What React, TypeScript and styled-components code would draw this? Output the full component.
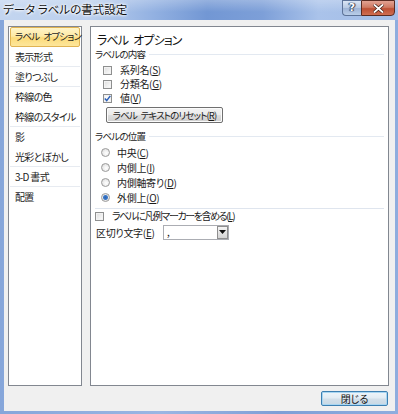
import styled, { createGlobalStyle } from 'styled-components';

const GlobalStyle = createGlobalStyle`
  html, body {
    margin: 0;
    padding: 0;
    background: #ffffff;
  }
  body {
    font-family: "Noto Sans CJK JP", "Noto Sans", sans-serif;
    font-feature-settings: "palt" 1;
    color: #1b1b1b;
  }
`;

const navItems = [
  { label: 'ラベル\u2002オプション', active: true, sep: false },
  { label: '表示形式', sep: true },
  { label: '塗りつぶし', sep: true },
  { label: '枠線の色', sep: false },
  { label: '枠線のスタイル', sep: true },
  { label: '影', sep: false },
  { label: '光彩とぼかし', sep: true },
  { label: '3-D 書式', sep: true },
  { label: '配置', sep: false },
];

const App = () => {
  return (
    <>
      <GlobalStyle />
      <Window>
        <TitleBar>
          <TitleText>データ ラベルの書式設定</TitleText>
          <CaptionButtons>
            <HelpButton>?</HelpButton>
            <CloseCaption>
              <svg width="11" height="9" viewBox="0 0 11 9">
                <path d="M1 0.5 L10 8.5 M10 0.5 L1 8.5" stroke="#3a1a12" strokeWidth="3.2" />
                <path d="M1 0.5 L10 8.5 M10 0.5 L1 8.5" stroke="#ffffff" strokeWidth="1.8" />
              </svg>
            </CloseCaption>
          </CaptionButtons>
        </TitleBar>
        <Client>
          <Panels>
            <NavList>
              {navItems.map((item) => (
                <NavItem key={item.label} $active={!!item.active} $sep={item.sep}>
                  {item.label}
                </NavItem>
              ))}
            </NavList>
            <OptionsPane>
              <PaneTitle>ラベル{'\u2002'}オプション</PaneTitle>
              <GroupHeader>ラベルの内容</GroupHeader>
              <CheckList>
                <OptionRow $indent={6}>
                  <CheckBox $checked={false} />
                  <span>系列名(<Key>S</Key>)</span>
                </OptionRow>
                <OptionRow $indent={6}>
                  <CheckBox $checked={false} />
                  <span>分類名(<Key>G</Key>)</span>
                </OptionRow>
                <OptionRow $indent={6}>
                  <CheckBox $checked>
                    <svg width="7" height="7" viewBox="0 0 7 7">
                      <path d="M0.8 3.6 L2.7 5.6 L6.3 0.9" fill="none" stroke="#2a5fb8" strokeWidth="1.5" />
                    </svg>
                  </CheckBox>
                  <span>値(<Key>V</Key>)</span>
                </OptionRow>
              </CheckList>
              <ResetButton>
                ラベル{'\u2002'}テキストのリセット(<Key>R</Key>)
              </ResetButton>
              <GroupHeader $gap={7}>ラベルの位置</GroupHeader>
              <RadioList>
                <RadioRow>
                  <RadioDot $checked={false} />
                  <span>中央(<Key>C</Key>)</span>
                </RadioRow>
                <RadioRow>
                  <RadioDot $checked={false} />
                  <span>内側上(<Key>I</Key>)</span>
                </RadioRow>
                <RadioRow>
                  <RadioDot $checked={false} />
                  <span>内側軸寄り(<Key>D</Key>)</span>
                </RadioRow>
                <RadioRow>
                  <RadioDot $checked />
                  <span>外側上(<Key>O</Key>)</span>
                </RadioRow>
              </RadioList>
              <Divider />
              <OptionRow $indent={-2} $tight>
                <CheckBox $checked={false} />
                <span>ラベルに凡例マーカーを含める(<Key>L</Key>)</span>
              </OptionRow>
              <SeparatorRow>
                <SeparatorLabel>区切り文字(<Key>E</Key>)</SeparatorLabel>
                <ComboBox>
                  <ComboValue>,</ComboValue>
                  <ComboArrow>
                    <svg width="7" height="4" viewBox="0 0 7 4">
                      <path d="M0 0 H7 L3.5 4 Z" fill="#111" />
                    </svg>
                  </ComboArrow>
                </ComboBox>
              </SeparatorRow>
            </OptionsPane>
          </Panels>
          <Footer>
            <CloseButton>閉じる</CloseButton>
          </Footer>
        </Client>
      </Window>
    </>
  );
};

export default App;

// Styled Components
const Window = styled.div`
  width: 398px;
  height: 414px;
  display: flex;
  flex-direction: column;
  background: linear-gradient(90deg, #86a6da 0%, #9ab6e3 40%, #7f9fd6 70%, #8fadde 100%);
  overflow: hidden;
`;

const TitleBar = styled.div`
  height: 20px;
  flex: none;
  display: flex;
  align-items: flex-start;
  justify-content: space-between;
  background:
    linear-gradient(180deg, rgba(255, 255, 255, 0.25) 0%, rgba(255, 255, 255, 0) 60%),
    linear-gradient(90deg, #c3d5ef 0%, #bcd0ee 22%, #94b2e2 38%, #7297d4 52%, #7d9fd8 66%, #aac3ea 80%, #a3bde7 100%);
`;

const TitleText = styled.div`
  padding: 2px 0 0 3px;
  font-size: 11.5px;
  line-height: 15px;
  color: #111;
  text-shadow: 0 0 4px #ffffff, 0 0 3px #ffffff, 0 0 2px #ffffff;
`;

const CaptionButtons = styled.div`
  display: flex;
  margin-right: 3px;
`;

const HelpButton = styled.div`
  width: 19px;
  height: 16px;
  box-sizing: border-box;
  border: 1px solid #5d7398;
  border-right: none;
  border-radius: 0 0 0 4px;
  background: linear-gradient(180deg, #dbe6f5 0%, #b7c9e3 50%, #9eb4d6 51%, #b9cde8 100%);
  color: #ffffff;
  font: bold 11px/14px "DejaVu Sans", sans-serif;
  text-align: center;
  text-shadow: 0 0 1px #1a2a44, 1px 0 1px #1a2a44, -1px 0 1px #1a2a44;
`;

const CloseCaption = styled.div`
  width: 34px;
  height: 16px;
  box-sizing: border-box;
  border: 1px solid #5a2b22;
  border-radius: 0 0 4px 0;
  background: linear-gradient(180deg, #e2a293 0%, #cf7a63 45%, #bd4f34 55%, #cf6e52 100%);
  display: flex;
  align-items: center;
  justify-content: center;
`;

const Client = styled.div`
  flex: 1;
  margin: 0 3px 4px 4px;
  padding: 6px 6px 5px 4px;
  background: #f0f0f0;
  display: flex;
  flex-direction: column;
`;

const Panels = styled.div`
  height: 360px;
  display: flex;
  gap: 8px;
`;

const NavList = styled.div`
  width: 74px;
  box-sizing: border-box;
  border: 1px solid #828790;
  background: #ffffff;
`;

const NavItem = styled.div<{ $active: boolean; $sep: boolean }>`
  height: 20px;
  margin: 0 1px;
  box-sizing: border-box;
  padding-left: 5px;
  font-size: 10px;
  letter-spacing: -0.7px;
  line-height: ${(p) => (p.$active ? '17px' : '19px')};
  white-space: nowrap;
  color: #1d1d1d;
  border-bottom: 1px solid ${(p) => (p.$sep ? '#e7ebf1' : 'transparent')};
  ${(p) =>
    p.$active &&
    `
    border: 1px solid #e0b352;
    border-radius: 2px;
    background: linear-gradient(180deg, #fff4c8 0%, #fde9a6 45%, #fcdb7a 55%, #fde69b 100%);
    padding-left: 4px;
    font-size: 9.5px;
    letter-spacing: -0.8px;
  `}
`;

const OptionsPane = styled.div`
  flex: 1;
  box-sizing: border-box;
  border: 1px solid #828790;
  background: #ffffff;
  padding: 5px 3px 0 6px;
  display: flex;
  flex-direction: column;
  font-size: 10px;
  letter-spacing: -0.3px;
`;

const PaneTitle = styled.div`
  height: 16px;
  font-size: 12px;
  letter-spacing: -0.9px;
  line-height: 16px;
  color: #111;
`;

const GroupHeader = styled.div<{ $gap?: number }>`
  height: 12px;
  margin: ${(p) => p.$gap ?? 0}px 0 0 -2px;
  display: flex;
  align-items: center;
  gap: 4px;
  font-size: 9.5px;
  letter-spacing: -0.8px;
  line-height: 12px;
  white-space: nowrap;

  &::after {
    content: '';
    flex: 1;
    height: 1px;
    margin-right: 1px;
    background: #e3e9f1;
  }
`;

const CheckList = styled.div`
  margin-top: 3px;
  display: flex;
  flex-direction: column;
`;

const OptionRow = styled.div<{ $indent: number; $tight?: boolean }>`
  height: 14px;
  display: flex;
  align-items: center;
  gap: 8px;
  margin-left: ${(p) => p.$indent}px;
  white-space: nowrap;
  line-height: 14px;
  letter-spacing: ${(p) => (p.$tight ? '-1.4px' : '-0.3px')};
`;

const CheckBox = styled.div<{ $checked: boolean }>`
  width: 9px;
  height: 9px;
  flex: none;
  box-sizing: border-box;
  border: 1px solid #8e8f8f;
  background: linear-gradient(135deg, #dcdcdc 0%, #f4f4f4 70%, #ffffff 100%);
  box-shadow: inset 0 0 0 1px #f2f2f2;
  display: flex;
  align-items: center;
  justify-content: center;
  ${(p) => p.$checked && 'background: #f7f7f7;'}
`;

const Key = styled.span`
  text-decoration: underline;
`;

const ResetButton = styled.div`
  margin: 2px 0 0 9px;
  width: 117px;
  height: 16px;
  box-sizing: border-box;
  border: 1px solid #707070;
  border-radius: 2px;
  background: linear-gradient(180deg, #f3f3f3 0%, #ebebeb 48%, #dddddd 52%, #cfcfcf 100%);
  box-shadow: inset 0 0 0 1px #fbfbfb;
  font-size: 9.5px;
  letter-spacing: -0.9px;
  line-height: 14px;
  text-align: center;
  white-space: nowrap;
`;

const RadioList = styled.div`
  margin-top: 3px;
  display: flex;
  flex-direction: column;
`;

const RadioRow = styled.div`
  height: 15px;
  display: flex;
  align-items: center;
  gap: 7px;
  padding-left: 4px;
  white-space: nowrap;
`;

const RadioDot = styled.div<{ $checked: boolean }>`
  width: 9px;
  height: 9px;
  flex: none;
  box-sizing: border-box;
  border-radius: 50%;
  border: 1px solid #9a9a9a;
  background: ${(p) =>
    p.$checked
      ? 'radial-gradient(circle at 50% 50%, #2c62b0 0, #3b79c9 2px, #e8e8e8 3px, #f6f6f6 100%)'
      : 'radial-gradient(circle at 60% 60%, #ffffff 0, #f1f1f1 40%, #d3d3d3 100%)'};
`;

const Divider = styled.div`
  height: 1px;
  margin: 3px 1px 0 -2px;
  background: #dfe5ee;
`;

const SeparatorRow = styled.div`
  height: 16px;
  margin: 1px 0 0 -1px;
  display: flex;
  align-items: center;
  white-space: nowrap;
`;

const SeparatorLabel = styled.div`
  width: 67px;
  flex: none;
`;

const ComboBox = styled.div`
  width: 66px;
  height: 15px;
  box-sizing: border-box;
  border: 1px solid #abadb3;
  background: #ffffff;
  display: flex;
  align-items: stretch;
`;

const ComboValue = styled.div`
  flex: 1;
  padding-left: 3px;
  line-height: 11px;
  font-size: 10px;
`;

const ComboArrow = styled.div`
  width: 11px;
  box-sizing: border-box;
  border: 1px solid #8f8f8f;
  background: linear-gradient(180deg, #f6f6f6 0%, #e4e4e4 50%, #d4d4d4 100%);
  display: flex;
  align-items: center;
  justify-content: center;
`;

const Footer = styled.div`
  flex: 1;
  display: flex;
  justify-content: flex-end;
  align-items: flex-start;
  padding-top: 5px;
`;

const CloseButton = styled.div`
  width: 67px;
  height: 15px;
  margin-right: 1px;
  box-sizing: border-box;
  border: 1px solid #3c7fb1;
  border-radius: 2px;
  background: linear-gradient(180deg, #eef5fa 0%, #e2ecf3 48%, #d3e0ea 52%, #c8d8e4 100%);
  box-shadow: inset 0 0 0 1px #a8d6f2;
  font-size: 10px;
  line-height: 13px;
  text-align: center;
  color: #111;
`;
